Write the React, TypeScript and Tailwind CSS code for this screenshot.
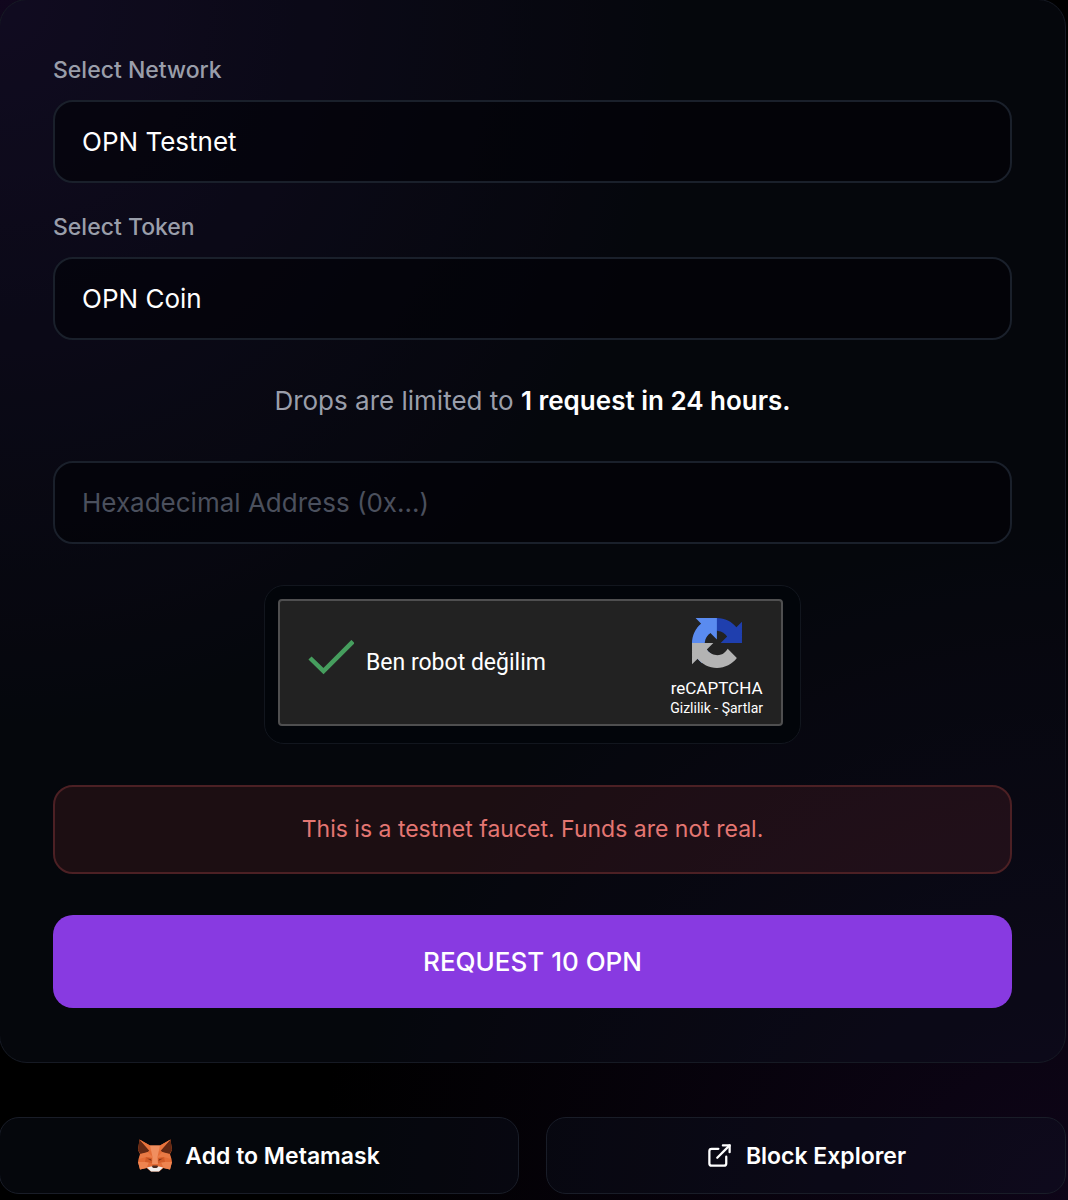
import { useState } from "react";
import { ExternalLink } from "lucide-react";

const fieldClass =
  "block w-full appearance-none rounded-[20px] border-2 border-[#1a202b] bg-[#010106]/60 px-[27px] py-5 text-[26px] leading-[39px] text-white outline-none placeholder:text-[#4b505d] focus:border-purple-700";

interface SelectFieldProps {
  id: string;
  label: string;
  options: string[];
}

function SelectField({ id, label, options }: SelectFieldProps) {
  return (
    <div>
      <label htmlFor={id} className="mb-3 block text-[23px] leading-9 font-medium text-[#9a9eaa]">
        {label}
      </label>
      <select id={id} className={fieldClass}>
        {options.map((option) => (
          <option key={option}>{option}</option>
        ))}
      </select>
    </div>
  );
}

function RecaptchaLogo() {
  return (
    <svg viewBox="0 0 64 64" className="h-[50px] w-[50px]" aria-hidden="true">
      <path
        fill="#1f3fae"
        d="M64 31.955l-.033-1.37V4.687l-7.16 7.16C50.948 4.674 42.033.093 32.05.093c-10.4 0-19.622 4.96-25.458 12.64l11.736 11.86a15.55 15.55 0 0 1 4.754-5.334c2.05-1.6 4.952-2.906 8.968-2.906.485 0 .86.057 1.135.163 4.976.393 9.288 3.14 11.828 7.124l-8.307 8.307L64 31.953"
      />
      <path
        fill="#5a8bf0"
        d="M31.862.094l-1.37.033H4.594l7.16 7.16C4.58 13.147 0 22.06 0 32.046c0 10.4 4.96 19.622 12.64 25.458L24.5 45.768a15.55 15.55 0 0 1-5.334-4.754c-1.6-2.05-2.906-4.952-2.906-8.968 0-.485.057-.86.163-1.135.393-4.976 3.14-9.288 7.124-11.828l8.307 8.307L31.86.095"
      />
      <path
        fill="#b3b3b3"
        d="M.001 32.045l.033 1.37v25.898l7.16-7.16c5.86 7.173 14.774 11.754 24.76 11.754 10.4 0 19.622-4.96 25.458-12.64l-11.736-11.86a15.55 15.55 0 0 1-4.754 5.334c-2.05 1.6-4.952 2.906-8.968 2.906-.485 0-.86-.057-1.135-.163-4.976-.393-9.288-3.14-11.828-7.124l8.307-8.307c-10.522.04-22.4.066-27.295-.005"
      />
    </svg>
  );
}

function MetamaskLogo() {
  return (
    <svg viewBox="0 0 34 33" className="h-[33px] w-[34px]" aria-hidden="true">
      {/* Face */}
      <path
        fill="#e46c36"
        d="M1.500.5L12 6.500h10L32.500.5 34 11l-2 4 1.500 5 .5 3-2 7.500-6.500-1.500-4.500 3.500h-8L8.500 29 2 30.500 0 23l.500-3L2 15l-2-4z"
      />
      {/* Ears */}
      <path fill="#642813" d="M1.500.5L0 11l2.500 4 6-1L12 11zM32.500.5L34 11l-2.500 4-6-1L22 11z" />
      <path fill="#e8733c" d="M1.500.5L12 6.500l3 6-3.500-.5zM32.500.5L22 6.500l-3 6 3.500-.5z" />
      {/* Forehead and nose bridge */}
      <path fill="#e97a45" d="M2.500 15l7-2 4.500 4v2l-6-1-7 2zM31.500 15l-7-2-4.500 4v2l6-1 7 2z" />
      <path fill="#f08f60" d="M12 6.500h10L19.500 18l.5 7h-6l.5-7z" />
      {/* Cheeks */}
      <path fill="#ef8450" d="M0 23h11l-2.500 6L2 30.500zM34 23H23l2.500 6 6.500 1.500z" />
      <path fill="#d45c28" d="M8 18l6 1v5l-7-1zM26 18l-6 1v5l7-1z" />
      {/* Eyes */}
      <path fill="#8a3516" d="M9 19.500l4 .5.500 2zM25 19.500l-4 .5-.500 2z" />
      {/* Muzzle */}
      <path fill="#f1eeec" d="M9 28.500l4-1h8l4 1-4 4h-8z" />
      <path fill="#4a2a20" d="M14.500 26.500h5l.5 1.500-1.500 1h-3l-1.500-1z" />
    </svg>
  );
}

function Recaptcha() {
  const [checked, setChecked] = useState(true);

  return (
    <div className="mx-auto w-fit rounded-[20px] border border-[#12161e] bg-[#02050a] pt-[13px] pr-[17px] pb-[17px] pl-[13px]">
      <div className="flex h-[127px] w-[505px] max-w-full items-center justify-between rounded-[4px] border-2 border-[#4f4f50] bg-[#222222] pr-[18px] pl-7 font-[Roboto,sans-serif] text-white">
        <div className="flex items-center gap-3">
          <span className="grid place-items-center">
            <input
              id="captcha"
              type="checkbox"
              checked={checked}
              onChange={(e) => setChecked(e.target.checked)}
              className={`col-start-1 row-start-1 h-[46px] w-[46px] appearance-none rounded ${checked ? "" : "border-2 border-gray-400"}`}
            />
            {checked && (
              <svg viewBox="0 0 46 46" className="pointer-events-none col-start-1 row-start-1 h-[46px] w-[46px]" aria-hidden="true">
                <path d="M2 18L15.500 31 45 1.500" fill="none" stroke="#469e5e" strokeWidth="4.500" />
              </svg>
            )}
          </span>
          <label htmlFor="captcha" className="text-[23px] leading-8">
            Ben robot değilim
          </label>
        </div>
        <div className="flex flex-col items-center pt-2">
          <RecaptchaLogo />
          <span className="mt-2 text-[17px] leading-6">reCAPTCHA</span>
          <span className="text-sm leading-4">
            <a href="#privacy">Gizlilik</a> - <a href="#terms">Şartlar</a>
          </span>
        </div>
      </div>
    </div>
  );
}

const footerClass =
  "flex flex-1 items-center justify-center gap-[13px] rounded-[20px] border border-[#191d28] bg-gray-900/30 py-[21px] text-[23px] leading-8 font-semibold";

export default function App() {
  const [address, setAddress] = useState("");

  return (
    <main className="-mt-px -ml-px min-h-screen bg-black bg-[radial-gradient(ellipse_700px_750px_at_0_0,#11071e,transparent),radial-gradient(ellipse_750px_700px_at_100%_100%,#0e0518,transparent)] pr-0.5 pb-[7px] font-[Inter,sans-serif] text-white">
      <form
        onSubmit={(e) => e.preventDefault()}
        className="rounded-[28px] border border-[#161a24] bg-gray-900/30 px-[53px] pt-[52px] pb-[54px]"
      >
        <div className="flex flex-col gap-[26px]">
          <SelectField id="network" label="Select Network" options={["OPN Testnet"]} />
          <SelectField id="token" label="Select Token" options={["OPN Coin"]} />
        </div>

        <p className="my-10 text-center text-[26px] leading-[41px] text-[#9a9eaa]">
          Drops are limited to <strong className="font-semibold text-white">1 request in 24 hours.</strong>
        </p>

        <div className="flex flex-col gap-[41px]">
          <input
            type="text"
            aria-label="Hexadecimal Address"
            placeholder="Hexadecimal Address (0x...)"
            value={address}
            onChange={(e) => setAddress(e.target.value)}
            className={fieldClass}
          />

          <Recaptcha />

          <p className="rounded-[20px] border-2 border-[#4c2024] bg-[#ef5350]/10 px-7 py-6 text-center text-[23px] leading-[37px] text-[#e47672]">
            This is a testnet faucet. Funds are not real.
          </p>

          <button type="submit" className="rounded-[20px] bg-[#883ae1] py-[27px] text-[26px] leading-[39px] font-medium">
            REQUEST 10 OPN
          </button>
        </div>
      </form>

      <div className="mt-[54px] flex gap-[27px]">
        <button type="button" className={footerClass}>
          <MetamaskLogo />
          Add to Metamask
        </button>
        <a href="#explorer" className={footerClass}>
          <ExternalLink className="h-[27px] w-[27px]" aria-hidden="true" />
          Block Explorer
        </a>
      </div>
    </main>
  );
}
